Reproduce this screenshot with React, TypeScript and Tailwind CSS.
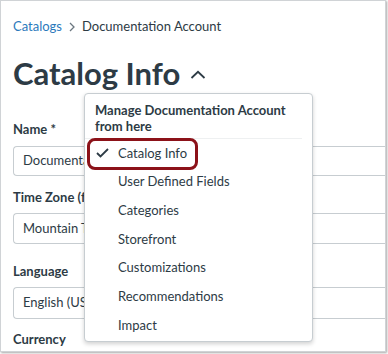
import React from "react";

const items = [
  "Catalog Info",
  "User Defined Fields",
  "Categories",
  "Storefront",
  "Customizations",
  "Recommendations",
  "Impact",
];

export default function App() {
  return (
    <div className="w-[388px] h-[354px] bg-white relative overflow-hidden" style={{ fontFamily: "Lato, 'Open Sans', sans-serif" }}>
      <div className="w-[386px] h-[352px] border border-[#d0d3d6] shadow-[1px_1px_2px_rgba(0,0,0,0.35)] bg-white relative overflow-hidden">
        <div className="pl-3 pt-4 text-[#2d3b45]">
          <div className="flex items-center h-5 text-[13px]">
            <span className="text-[#2b7abc]">Catalogs</span>
            <svg width="8" height="10" viewBox="0 0 8 10" className="mx-[6px]">
              <path d="M2 1 L6 5 L2 9" fill="none" stroke="#6b7780" strokeWidth="1.3" />
            </svg>
            <span>Documentation Account</span>
          </div>
          <div className="flex items-center mt-[18px] h-9">
            <span className="text-[31px] leading-9 font-bold text-[#2d3b45]">Catalog Info</span>
            <svg width="16" height="10" viewBox="0 0 16 10" className="ml-[10px] mt-[4px]">
              <path d="M1.5 8 L8 1.8 L14.5 8" fill="none" stroke="#2d3b45" strokeWidth="1.8" />
            </svg>
          </div>
          <div className="mt-[28px] text-[13px] leading-5 font-bold">Name *</div>
          <div className="mt-[7px] h-[30px] border border-r-0 border-[#c7cdd1] rounded-l-[4px] flex items-center pl-[9px] text-[13px]">Documentation Account</div>
          <div className="mt-[11px] text-[13px] leading-5 font-bold">Time Zone (for all dates)</div>
          <div className="mt-[6px] h-[31px] border border-r-0 border-[#c7cdd1] rounded-l-[4px] flex items-center pl-[9px] text-[13px]">Mountain Time (US &amp; Canada)</div>
          <div className="mt-[17px] text-[13px] leading-5 font-bold">Language</div>
          <div className="mt-[6px] h-[32px] border border-r-0 border-[#c7cdd1] rounded-l-[4px] flex items-center pl-[9px] text-[13px]">English (US)</div>
          <div className="mt-[10px] text-[13px] leading-5 font-bold">Currency</div>
        </div>

        <div className="absolute left-[83px] top-[92px] w-[229px] h-[249px] bg-white border border-[#c7cdd1] rounded-[4px] shadow-[0_2px_4px_rgba(0,0,0,0.18)] text-[#2d3b45]">
          <div className="pl-[10px] pt-[8px] pr-2 text-[13px] leading-[16px] font-bold h-[44px]">
            Manage Documentation Account
            <br />
            from here
          </div>
          <div className="h-px bg-[#eef0f1] mr-[10px]" />
          <div className="flex flex-col">
            {items.map((it, i) => (
              <div key={it} className="h-[28.7px] flex items-center text-[13px] relative">
                {i === 0 && (
                  <>
                    <svg width="13" height="10" viewBox="0 0 13 10" className="absolute left-[11px] top-[9px]">
                      <path d="M1 5 L4.5 8.5 L12 1" fill="none" stroke="#2d3b45" strokeWidth="1.8" />
                    </svg>
                    <div className="absolute left-[2px] top-[-1px] w-[111px] h-[32px] border-[3px] border-[#8c1219] rounded-[8px]" />
                  </>
                )}
                <span className="pl-[33px]">{it}</span>
              </div>
            ))}
          </div>
        </div>
      </div>
    </div>
  );
}
